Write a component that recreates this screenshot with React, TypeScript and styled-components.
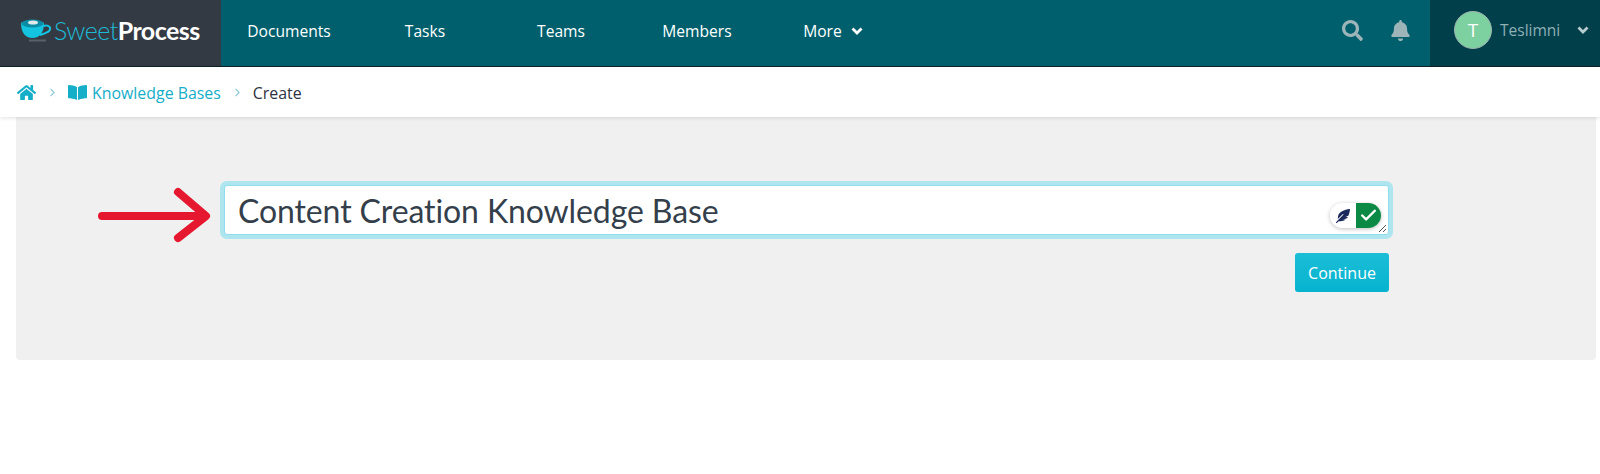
import React from "react";
import styled, { createGlobalStyle } from "styled-components";
import { FaHome, FaBookOpen, FaSearch, FaBell, FaFeatherAlt } from "react-icons/fa";
import { FiChevronRight, FiCheck } from "react-icons/fi";

const GlobalStyle = createGlobalStyle`
    html, body {
        margin: 0;
        padding: 0;
        background: white;
        font-family: "Open Sans", "Liberation Sans", sans-serif;
    }
`;

const Header = styled.header`
    height: 67px;
    box-sizing: border-box;
    border-bottom: 1px solid #10222a;
    display: flex;
    align-items: stretch;
    background: #005f6d;
`;

const LogoArea = styled.div`
    width: 221px;
    box-sizing: border-box;
    padding: 0 0 6px 21px;
    background: #343a43;
    display: flex;
    align-items: center;
    font-family: "Lato", sans-serif;
    font-size: 25px;
    letter-spacing: -0.55px;
`;

const LogoSweet = styled.span`
    color: #1cbcd6;
    font-weight: 300;
    margin-left: 2px;
`;

const LogoProcess = styled.span`
    color: white;
    font-weight: 700;
`;

const Nav = styled.nav`
    display: flex;
    flex: 1;
`;

const NavItem = styled.div`
    width: 136px;
    box-sizing: border-box;
    padding-bottom: 4px;
    display: flex;
    align-items: center;
    justify-content: center;
    gap: 9px;
    color: white;
    font-size: 15.6px;
    font-weight: 500;
`;

const HeaderIcons = styled.div`
    display: flex;
    align-items: center;
    gap: 27px;
    padding: 0 19px 6px 0;
    color: #9db5b8;
    font-size: 21px;
`;

const UserArea = styled.div`
    width: 170px;
    box-sizing: border-box;
    padding: 0 0 6px 24px;
    background: #013f4b;
    display: flex;
    align-items: center;
    color: #8fb0b5;
    font-size: 15.5px;
`;

const Avatar = styled.div`
    width: 38px;
    height: 38px;
    box-sizing: border-box;
    border: 1px solid #9db5b0;
    border-radius: 50%;
    background: #7dd0a0;
    color: white;
    font-size: 19px;
    display: flex;
    align-items: center;
    justify-content: center;
    margin-right: 8px;
`;

const UserChevron = styled.span`
    color: #b9cdd0;
    display: flex;
    margin-left: 17px;
`;

const Breadcrumb = styled.div`
    height: 50px;
    box-sizing: border-box;
    padding: 1px 0 0 17px;
    display: flex;
    align-items: center;
    background: white;
    box-shadow: 0 1px 4px rgba(0, 0, 0, 0.12);
    position: relative;
    font-size: 15.9px;
    color: #14aec8;
`;

const Crumb = styled.span`
    display: flex;
    align-items: center;
    gap: 5px;
    color: ${(p: { $current?: boolean }) => (p.$current ? "#2b3240" : "#14aec8")};
`;

const HomeIcon = styled(FaHome)`
    font-size: 19px;
`;

const BookIcon = styled(FaBookOpen)`
    font-size: 19px;
`;

const Separator = styled.span`
    display: flex;
    color: #8fcbd6;
    font-size: 13px;
    margin: 0 9px 0 10px;
`;

const Panel = styled.main`
    margin: 0 4px 0 16px;
    height: 243px;
    box-sizing: border-box;
    padding: 58px 207px 0 80px;
    background: #f0f0f0;
    border-radius: 0 0 4px 4px;
`;

const InputRow = styled.div`
    display: flex;
    align-items: center;
`;

const Arrow = styled.svg`
    width: 128px;
    height: 70px;
    flex: none;
`;

const TitleBox = styled.div`
    flex: 1;
    height: 50px;
    box-sizing: border-box;
    position: relative;
    display: flex;
    align-items: center;
    padding-left: 13px;
    background: white;
    border: 1px solid #8fdded;
    border-radius: 3px;
    box-shadow: 0 0 0 4px #aee5ee;
    color: #343f4b;
    font-family: "Lato", sans-serif;
    font-size: 32px;
    letter-spacing: -0.1px;
`;

const Widget = styled.div`
    position: absolute;
    right: 7px;
    bottom: 6px;
    width: 51px;
    height: 25px;
    display: flex;
    border-radius: 13px;
    overflow: hidden;
    box-shadow: 0 1px 4px rgba(0, 0, 0, 0.25);
`;

const WidgetFeather = styled.span`
    flex: 1;
    display: flex;
    align-items: center;
    justify-content: center;
    background: white;
    color: #1b2a5c;
    font-size: 14px;
`;

const WidgetCheck = styled.span`
    width: 25px;
    display: flex;
    align-items: center;
    justify-content: center;
    background: #0b8a45;
    color: white;
    font-size: 19px;
`;

const ResizeHandle = styled.svg`
    position: absolute;
    right: 1px;
    bottom: 1px;
    width: 9px;
    height: 9px;
`;

const Actions = styled.div`
    display: flex;
    justify-content: flex-end;
    margin-top: 8px;
`;

const ContinueButton = styled.button`
    width: 94px;
    height: 39px;
    border: 0;
    border-radius: 3px;
    background: linear-gradient(#1cbdd6, #06b3cf);
    color: white;
    font-family: "Open Sans", sans-serif;
    font-size: 16px;
    padding: 0;
`;

function CupLogo() {
    return (
        <svg width="31" height="24" viewBox="0 0 31 24">
            <path d="M0 5 C0 3 23 3 23 5 C23 14 19 20 11.500 20 C4 20 0 14 0 5Z" fill="#14c3e0" />
            <ellipse cx="11.500" cy="5.500" rx="11" ry="4" fill="#0a8ca5" />
            <ellipse cx="12" cy="4.500" rx="5" ry="2" fill="#dfe9eb" />
            <path d="M22 8 C28 6 31 10 28 13 C26 15 22 16 19 17" fill="none" stroke="#14c3e0" strokeWidth="2" />
            <path d="M8 22.500 H25" stroke="#5b6168" strokeWidth="2" />
        </svg>
    );
}

function BoldChevron() {
    return (
        <svg width="12" height="8" viewBox="0 0 12 8">
            <path d="M1.500 1.500 L6 6 L10.500 1.500" fill="none" stroke="currentColor" strokeWidth="2.800" />
        </svg>
    );
}

export default function App() {
    return (
        <React.Fragment>
            <GlobalStyle />
            <Header>
                <LogoArea>
                    <CupLogo />
                    <LogoSweet>Sweet</LogoSweet>
                    <LogoProcess>Process</LogoProcess>
                </LogoArea>
                <Nav>
                    <NavItem>Documents</NavItem>
                    <NavItem>Tasks</NavItem>
                    <NavItem>Teams</NavItem>
                    <NavItem>Members</NavItem>
                    <NavItem>
                        More
                        <BoldChevron />
                    </NavItem>
                </Nav>
                <HeaderIcons>
                    <FaSearch />
                    <FaBell />
                </HeaderIcons>
                <UserArea>
                    <Avatar>T</Avatar>
                    Teslimni
                    <UserChevron>
                        <BoldChevron />
                    </UserChevron>
                </UserArea>
            </Header>
            <Breadcrumb>
                <Crumb>
                    <HomeIcon />
                </Crumb>
                <Separator>
                    <FiChevronRight />
                </Separator>
                <Crumb>
                    <BookIcon />
                    Knowledge Bases
                </Crumb>
                <Separator>
                    <FiChevronRight />
                </Separator>
                <Crumb $current>Create</Crumb>
            </Breadcrumb>
            <Panel>
                <InputRow>
                    <Arrow viewBox="0 0 128 70">
                        <path
                            d="M6 41 H109 M82 17 L110 41 L82 63"
                            fill="none"
                            stroke="#e5182f"
                            strokeWidth="8"
                            strokeLinecap="round"
                            strokeLinejoin="round"
                        />
                    </Arrow>
                    <TitleBox>
                        Content Creation Knowledge Base
                        <Widget>
                            <WidgetFeather>
                                <FaFeatherAlt />
                            </WidgetFeather>
                            <WidgetCheck>
                                <FiCheck strokeWidth={3} />
                            </WidgetCheck>
                        </Widget>
                        <ResizeHandle viewBox="0 0 9 9">
                            <path d="M1 8 L8 1 M5 8 L8 5" stroke="#555" strokeWidth="1" />
                        </ResizeHandle>
                    </TitleBox>
                </InputRow>
                <Actions>
                    <ContinueButton>Continue</ContinueButton>
                </Actions>
            </Panel>
        </React.Fragment>
    );
}
